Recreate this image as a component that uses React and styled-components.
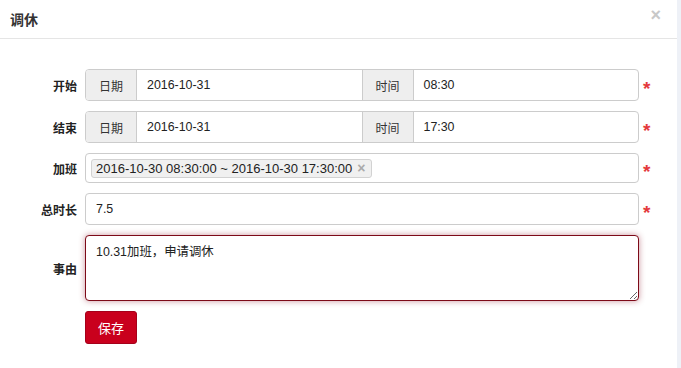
import React from "react";
import styled, { createGlobalStyle } from "styled-components";

const GlobalStyle = createGlobalStyle`
  html, body {
    margin: 0;
    padding: 0;
    background: #fff;
  }
  body {
    font-family: "Liberation Sans", "Noto Sans CJK SC", sans-serif;
    color: #333;
  }
`;

const Page = styled.div`
  display: flex;
  width: 681px;
  height: 368px;
  overflow: hidden;
`;

const Modal = styled.div`
  flex: 1;
  background: #fff;
`;

const SideStrip = styled.div`
  width: 4px;
  background: #eef1f7;
`;

const Header = styled.div`
  display: flex;
  align-items: center;
  justify-content: space-between;
  height: 38px;
  padding: 0 16px 0 10px;
  border-bottom: 1px solid #e5e5e5;
`;

const Title = styled.h4`
  margin: 0;
  font-size: 14px;
  font-weight: bold;
  color: #333;
`;

const Close = styled.span`
  font-size: 18px;
  font-weight: bold;
  color: #c8c8c8;
  line-height: 1;
  margin-top: -8px;
  cursor: pointer;
`;

const Form = styled.form`
  display: grid;
  grid-template-columns: 77px 554px 20px;
  column-gap: 8px;
  row-gap: 10px;
  padding-top: 30px;
  align-items: center;
`;

const Label = styled.label`
  font-size: 12px;
  font-weight: bold;
  text-align: right;
  color: #222;
`;

const Required = styled.span`
  color: #e4393c;
  font-size: 19px;
  font-weight: bold;
  line-height: 1;
  margin-left: -4px;
  padding-top: 6px;
`;

const Group = styled.div`
  display: flex;
  height: 32px;
  border: 1px solid #ccc;
  border-radius: 4px;
  overflow: hidden;
  box-sizing: border-box;
`;

const Addon = styled.span`
  display: flex;
  align-items: center;
  justify-content: center;
  width: 50px;
  flex: none;
  background: #eee;
  font-size: 12px;
  color: #333;
  border-left: ${(p) => (p.$first ? "none" : "1px solid #ccc")};
  border-right: 1px solid #ccc;
`;

const Field = styled.span`
  flex: 1;
  display: flex;
  align-items: center;
  padding: 0 10px;
  font-size: 12.4px;
  color: #222;
`;

const TagBox = styled.div`
  display: flex;
  align-items: center;
  height: 30px;
  padding: 0 5px;
  border: 1px solid #ccc;
  border-radius: 4px;
  box-sizing: border-box;
`;

const Tag = styled.span`
  display: inline-flex;
  align-items: center;
  gap: 5px;
  height: 19px;
  padding: 0 6px 0 4px;
  background: #f0f0f0;
  border: 1px solid #d2d2d2;
  border-radius: 3px;
  font-size: 13px;
  color: #222;
  box-sizing: border-box;
`;

const TagRemove = styled.span`
  color: #aaa;
  font-weight: bold;
  font-size: 14px;
`;

const Area = styled.textarea`
  height: 66px;
  box-sizing: border-box;
  padding: 6px 10px;
  border: 1px solid #7d0a18;
  border-radius: 4px;
  box-shadow: 0 0 6px rgba(140, 20, 40, 0.45);
  font-family: "Liberation Sans", "Noto Sans CJK SC", sans-serif;
  font-size: 12.4px;
  color: #222;
  outline: none;
  resize: vertical;
`;

const SaveButton = styled.button`
  width: 52px;
  height: 33px;
  background: #c9001d;
  border: 1px solid #a5001a;
  border-radius: 3px;
  color: #fff;
  font-family: "Liberation Sans", "Noto Sans CJK SC", sans-serif;
  font-size: 13px;
  cursor: pointer;
`;

const Empty = styled.span``;

export default function App() {
  return (
    <Page>
      <GlobalStyle />
      <Modal>
        <Header>
          <Title>调休</Title>
          <Close>×</Close>
        </Header>
        <Form onSubmit={(e) => e.preventDefault()}>
          <Label>开始</Label>
          <Group>
            <Addon $first>日期</Addon>
            <Field>2016-10-31</Field>
            <Addon>时间</Addon>
            <Field>08:30</Field>
          </Group>
          <Required>*</Required>

          <Label>结束</Label>
          <Group>
            <Addon $first>日期</Addon>
            <Field>2016-10-31</Field>
            <Addon>时间</Addon>
            <Field>17:30</Field>
          </Group>
          <Required>*</Required>

          <Label>加班</Label>
          <TagBox>
            <Tag>
              2016-10-30 08:30:00 ~ 2016-10-30 17:30:00
              <TagRemove>×</TagRemove>
            </Tag>
          </TagBox>
          <Required>*</Required>

          <Label>总时长</Label>
          <Group>
            <Field>7.5</Field>
          </Group>
          <Required>*</Required>

          <Label>事由</Label>
          <Area defaultValue="10.31加班，申请调休" />
          <Empty />

          <Empty />
          <div>
            <SaveButton type="submit">保存</SaveButton>
          </div>
          <Empty />
        </Form>
      </Modal>
      <SideStrip />
    </Page>
  );
}
